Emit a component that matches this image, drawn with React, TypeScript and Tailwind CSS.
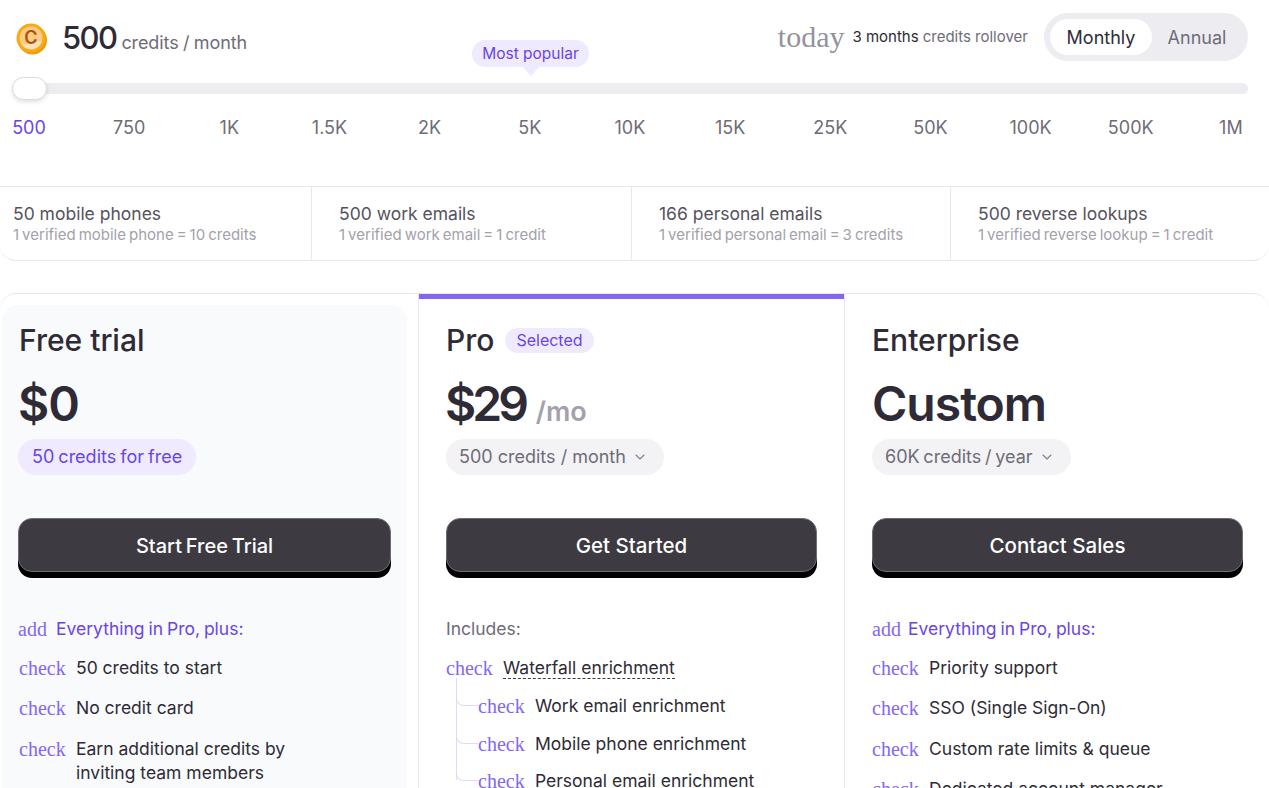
import { ChevronDown } from "lucide-react";

const STOPS = ["500", "750", "1K", "1.5K", "2K", "5K", "10K", "15K", "25K", "50K", "100K", "500K", "1M"];

const STATS = [
  { title: "50 mobile phones", note: "1 verified mobile phone = 10 credits", cls: "w-[312px] pl-[13px] border-r" },
  { title: "500 work emails", note: "1 verified work email = 1 credit", cls: "w-[320px] pl-[27px] border-r" },
  { title: "166 personal emails", note: "1 verified personal email = 3 credits", cls: "w-[319px] pl-[27px] border-r" },
  { title: "500 reverse lookups", note: "1 verified reverse lookup = 1 credit", cls: "flex-1 pl-[27px]" },
];

function Coin() {
  return (
    <svg width="32" height="32" viewBox="0 0 32 32">
      <circle cx="16.5" cy="17" r="14.5" fill="#ef9c0a" />
      <circle cx="15" cy="15" r="14.5" fill="#f6aa14" />
      <circle cx="15" cy="15" r="11.5" fill="#fccb85" />
      <path d="M6 21.5 A11.5 11.5 0 0 0 26 18 Z" fill="#fde3bd" />
      <text x="15" y="21" textAnchor="middle" fontSize="18" fontWeight="600" fill="#ad5208" fontFamily="Inter, sans-serif">
        C
      </text>
    </svg>
  );
}

function Check({ text, dashed, two }: { text: string; dashed?: boolean; two?: string }) {
  return (
    <li className="flex items-start nth-3:pt-[1px]">
      <span className="w-[57px] shrink-0 font-['Liberation_Serif',serif] text-[20px] leading-[24px] text-[#8466f3]">check</span>
      <span className="text-[17.5px] leading-[24px] text-[#2e2b36]">
        <span className={dashed ? "border-b border-dashed border-[#3b3842]" : ""}>{text}</span>
        {two && <span className="block">{two}</span>}
      </span>
    </li>
  );
}

function SubCheck({ text }: { text: string }) {
  return (
    <li className="relative flex items-start pl-[32px]">
      <span className="absolute left-[10px] top-[-2px] h-[14px] w-[22px] rounded-bl-[8px] border-b border-l border-[#e0d9fc]" />
      <span className="w-[57px] shrink-0 font-['Liberation_Serif',serif] text-[20px] leading-[24px] text-[#8466f3]">check</span>
      <span className="text-[17.5px] leading-[24px] text-[#2e2b36]">{text}</span>
    </li>
  );
}

function Plus({ addCls }: { addCls: string }) {
  return (
    <p className="flex h-[24px] items-center text-[17.5px] text-[#6a45e6] [word-spacing:-1px]">
      <span className={`${addCls} shrink-0 font-['Liberation_Serif',serif] text-[20px] text-[#8466f3]`}>add</span>
      Everything in Pro, plus:
    </p>
  );
}

function CtaButton({ label, cls }: { label: string; cls: string }) {
  return (
    <button className={`${cls} mt-[43px] flex h-[54px] w-full items-center justify-center rounded-[14px] border border-[#6f6c76] bg-[#3d3a42] pt-[2px] font-medium text-white shadow-[0_6px_0_0_#000]`}>
      {label}
    </button>
  );
}

function CreditPill({ label, cls }: { label: string; cls: string }) {
  return (
    <div className="mt-[11px] flex h-[36px] w-fit items-center gap-[6px] rounded-full bg-[#f3f3f6] pb-[1px] pl-[13px] pr-[16px] text-[18px] text-[#6f6c78]">
      <span className={cls}>{label}</span>
      <ChevronDown size={16} strokeWidth={1.75} className="text-[#85828d]" />
    </div>
  );
}

export default function App() {
  return (
    <div className="h-[788px] overflow-hidden bg-white font-['Inter',sans-serif] text-[#2e2b36]">
      <div className="flex h-[83px] items-start pr-[21px]">
        <div className="flex items-center pl-[16px] pt-[22px]">
          <Coin />
          <span className="mb-[2px] ml-[14px] text-[31px] font-medium leading-[32px] tracking-[-1.6px]">500</span>
          <span className="ml-[5px] mt-[8px] text-[18px] leading-[24px] text-[#6f6c78] tracking-[-0.1px] [word-spacing:-0.5px]">credits / month</span>
        </div>
        <div className="ml-auto flex items-center pt-[13px]">
          <span className="font-['Liberation_Serif',serif] text-[30px] leading-[48px] text-[#95929c]">today</span>
          <span className="ml-[8px] text-[15px] text-[#2e2b36]">3 months</span>
          <span className="ml-[4px] text-[15px] text-[#6f6c78]">credits rollover</span>
          <div className="ml-[16px] flex h-[48px] w-[204px] items-center rounded-full bg-[#edecf1] p-[6px] text-[18px]">
            <span className="flex h-[36px] w-[102px] items-center justify-center rounded-full bg-white">Monthly</span>
            <span className="flex-1 text-center text-[#6f6c78]">Annual</span>
          </div>
        </div>
      </div>

      <div className="relative h-[103px] pl-[12px] pr-[21px]">
        <div className="absolute left-[472px] top-[-43px] flex h-[27px] w-[117px] items-center justify-center rounded-full bg-[#efeafe] text-[15.5px] text-[#6a45e6]">
          Most popular
          <span className="absolute left-[50px] top-[26px] h-0 w-0 border-x-[9px] border-t-[10px] border-x-transparent border-t-[#efeafe]" />
        </div>
        <div className="h-[11px] rounded-full bg-[#edecf1]" />
        <div className="absolute left-[12px] top-[-6px] h-[23px] w-[35px] rounded-full border border-[#dddce2] bg-white shadow-[0_2px_4px_rgba(0,0,0,0.12)]" />
        <div className="ml-[-1px] mr-[-1px] mt-[22px] flex justify-between text-[18px] leading-[24px] text-[#6f6c78]">
          {STOPS.map((stop, i) => (
            <span key={stop} className={`flex w-[36px] justify-center whitespace-nowrap ${i === 0 ? "text-[#6a45e6]" : ""}`}>
              {stop}
            </span>
          ))}
        </div>
      </div>

      <div className="flex h-[75px] rounded-b-[16px] border-y border-[#e8e8ec]">
        {STATS.map((stat) => (
          <div key={stat.title} className={`${stat.cls} border-[#e8e8ec] pt-[15px]`}>
            <p className="text-[17.5px] leading-[24px] text-[#55525d]">{stat.title}</p>
            <p className="text-[15px] leading-[18px] text-[#a3a1ab] [word-spacing:-1.2px]">{stat.note}</p>
          </div>
        ))}
      </div>

      <div className="mt-[32px] flex h-[600px] rounded-t-[16px] border-t border-[#e8e8ec]">
        <div className="w-[418px] shrink-0 pl-[2px] pr-[11px] pt-[11px]">
          <div className="h-full rounded-t-[16px] bg-[#f9fafc] px-[16px] pt-[17px]">
            <h2 className="ml-[1px] h-[36px] text-[30px] font-medium leading-[36px]">Free trial</h2>
            <div className="mt-[22px] h-[48px] text-[48px] font-semibold leading-[48px] tracking-[-1px]">$0</div>
            <div className="mt-[11px] flex h-[36px] w-fit items-center rounded-full bg-[#efeafe] px-[14px] pb-[1px] text-[18px] text-[#6a45e6] [word-spacing:-1px]">
              50 credits for free
            </div>
            <CtaButton label="Start Free Trial" cls="text-[20px] [word-spacing:-1.5px]" />
            <div className="mt-[45px]">
              <Plus addCls="w-[38px]" />
            </div>
            <ul className="ml-[1px] mt-[15px] space-y-[16px]">
              <Check text="50 credits to start" />
              <Check text="No credit card" />
              <Check text="Earn additional credits by" two="inviting team members" />
            </ul>
          </div>
        </div>

        <div className="w-[427px] shrink-0 border-x border-[#e8e8ec]">
          <div className="h-[5px] bg-[#8466f3]" />
          <div className="px-[27px] pt-[23px]">
            <div className="flex h-[36px] items-center gap-[11px]">
              <h2 className="text-[30px] font-medium leading-[36px]">Pro</h2>
              <span className="flex h-[25px] items-center rounded-full bg-[#efeafe] px-[11px] text-[16px] text-[#6a45e6]">Selected</span>
            </div>
            <div className="mt-[22px] flex h-[48px] items-baseline gap-[11px]">
              <span className="ml-[-1px] text-[48px] font-semibold leading-[48px] tracking-[-4px]">$29</span>
              <span className="text-[27px] font-semibold text-[#a3a1ab]">/mo</span>
            </div>
            <CreditPill label="500 credits / month" cls="" />
            <CtaButton label="Get Started" cls="text-[20.5px]" />
            <p className="mt-[45px] h-[24px] text-[17.5px] leading-[24px] text-[#6f6c78]">Includes:</p>
            <ul className="mt-[15px]">
              <Check text="Waterfall enrichment" dashed />
            </ul>
            <ul className="relative mt-[14px] space-y-[13.5px]">
              <span className="absolute bottom-0 left-[10px] top-[-16px] border-l border-[#e0d9fc]" />
              <SubCheck text="Work email enrichment" />
              <SubCheck text="Mobile phone enrichment" />
              <SubCheck text="Personal email enrichment" />
            </ul>
          </div>
        </div>

        <div className="min-w-0 flex-1 pl-[27px] pr-[26px] pt-[28px]">
          <h2 className="h-[36px] text-[30px] font-medium leading-[36px]">Enterprise</h2>
          <div className="mt-[22px] h-[48px] text-[48px] font-semibold leading-[48px] tracking-[-1px]">Custom</div>
          <CreditPill label="60K credits / year" cls="[word-spacing:-1.3px]" />
          <CtaButton label="Contact Sales" cls="text-[20.5px]" />
          <div className="mt-[45px]">
            <Plus addCls="w-[36px]" />
          </div>
          <ul className="mt-[15px] space-y-[16px]">
            <Check text="Priority support" />
            <Check text="SSO (Single Sign-On)" />
            <Check text="Custom rate limits & queue" />
            <Check text="Dedicated account manager" />
          </ul>
        </div>
      </div>
    </div>
  );
}
